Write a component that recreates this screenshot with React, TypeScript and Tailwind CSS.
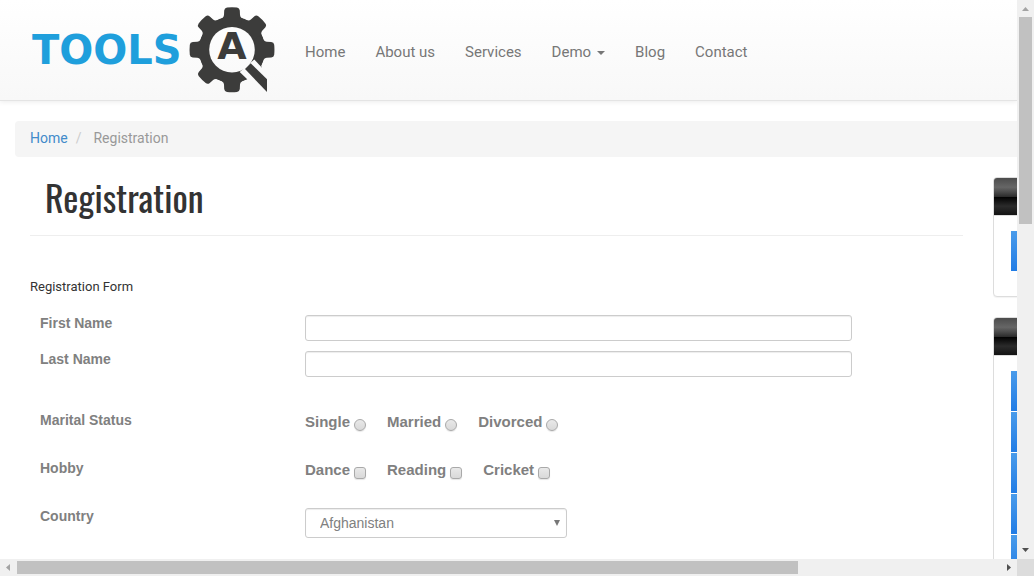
import React from "react";

const teeth = [0, 45, 90, 180, 225, 270, 315];
const navLinks = ["Home", "About us", "Services", "Demo", "Blog", "Contact"];

function Logo() {
  return (
    <svg width="246" height="90" viewBox="30 5 246 90" role="img" aria-label="Tools QA">
      <defs>
        <mask id="lens" maskUnits="userSpaceOnUse" x="180" y="0" width="100" height="100">
          <rect x="180" y="0" width="100" height="100" fill="#fff" />
          <circle cx="232" cy="49.7" r="22.8" fill="#000" />
          <path d="M239.7 72 L248.3 80.3 L252 97 L276 97 L276 70 L262 67.8 L254.3 59.5 Z" fill="#000" />
        </mask>
      </defs>
      <text x="32" y="64" fontFamily="'DejaVu Sans', sans-serif" fontWeight="700" fontSize="40" fill="#1f9fdc">
        TOOLS
      </text>
      <g mask="url(#lens)" fill="#3c3c3b">
        <circle cx="232" cy="49.7" r="33.2" />
        {teeth.map((angle) => (
          <path
            key={angle}
            transform={`rotate(${angle} 232 49.7)`}
            d="M217 20.5 Q223.8 18.5 224 15 L224.2 10.5 Q224.5 7.8 227 7.5 Q232 7 237 7.5 Q239.5 7.8 239.8 10.5 L240 15 Q240.2 18.5 247 20.5 L242 28 L222 28 Z"
          />
        ))}
        <path
          transform="rotate(135 232 49.7)"
          d="M217 20.5 Q223.8 18.5 224 15 L224.2 10.5 L239.8 10.5 L240 15 Q240.2 18.5 247 20.5 L242 28 L222 28 Z"
        />
      </g>
      <path d="M245 69 L250.7 63.3 L267 79.3 L267 92 Z" fill="#3c3c3b" />
      <text x="232" y="59" textAnchor="middle" fontFamily="'DejaVu Sans', sans-serif" fontWeight="700" fontSize="38" fill="#3c3c3b">
        A
      </text>
    </svg>
  );
}

function Header() {
  return (
    <header className="flex h-[101px] shrink-0 items-start border-b border-[#e4e4e4] bg-gradient-to-b from-white to-[#f8f8f8] pl-[30px] pt-[5px] shadow-[0_1px_5px_rgba(0,0,0,0.08)]">
      <a href="#" className="shrink-0">
        <Logo />
      </a>
      <nav className="ml-[14px] mt-[37px] flex shrink-0 font-['Roboto',sans-serif] text-[15px] leading-5 text-[#777]">
        {navLinks.map((label) => (
          <a key={label} href="#" className="flex items-center px-[15px]">
            {label}
            {label === "Demo" && (
              <span className="ml-[6px] mt-[2px] border-x-4 border-t-4 border-x-transparent border-t-[#777]" />
            )}
          </a>
        ))}
      </nav>
    </header>
  );
}

function Row({ label, htmlFor, className, children }: {
  label: string;
  htmlFor?: string;
  className?: string;
  children: React.ReactNode;
}) {
  const labelClass = "w-[265px] shrink-0 text-sm leading-4 font-bold text-[#808080]";
  return (
    <div className={`flex items-start ${className ?? ""}`}>
      {htmlFor ? (
        <label htmlFor={htmlFor} className={labelClass}>{label}</label>
      ) : (
        <span className={labelClass}>{label}</span>
      )}
      {children}
    </div>
  );
}

function Choices({ type, name, options }: { type: "radio" | "checkbox"; name: string; options: string[] }) {
  const shape = type === "radio" ? "rounded-full" : "rounded-[3px]";
  return (
    <div role="group" aria-label={name} className="flex gap-[21px]">
      {options.map((option) => (
        <label key={option} className="flex items-start gap-1 text-[15px] leading-5 font-bold text-[#808080]">
          {option}
          <input
            type={type}
            name={name}
            className={`mt-[7px] size-3 appearance-none border border-[#a9a9a9] bg-gradient-to-b from-[#e9e9e9] to-[#d9d9d9] shadow-[0_1px_1px_rgba(0,0,0,0.1)] checked:bg-[#777] ${shape}`}
          />
        </label>
      ))}
    </div>
  );
}

const inputClass =
  "h-[26px] min-w-0 flex-1 rounded-[3px] border border-[#ccc] bg-white px-3 text-sm text-[#777] shadow-[inset_0_1px_1px_rgba(0,0,0,0.075)]";

function RegistrationForm() {
  return (
    <form className="pl-[10px] pr-[111px] pt-[18px]">
      <Row label="First Name" htmlFor="first">
        <input id="first" type="text" className={inputClass} />
      </Row>
      <Row label="Last Name" htmlFor="last" className="mt-[10px]">
        <input id="last" type="text" className={inputClass} />
      </Row>
      <Row label="Marital Status" className="mt-[35px]">
        <Choices type="radio" name="Marital Status" options={["Single", "Married", "Divorced"]} />
      </Row>
      <Row label="Hobby" className="mt-7">
        <Choices type="checkbox" name="Hobby" options={["Dance", "Reading", "Cricket"]} />
      </Row>
      <Row label="Country" htmlFor="country" className="mt-7">
        <div className="relative w-[262px]">
          <select
            id="country"
            className="block h-[30px] w-full appearance-none rounded-[3px] border border-[#ccc] bg-white px-[14px] text-sm text-[#808080] shadow-[inset_0_1px_1px_rgba(0,0,0,0.075)]"
          >
            <option>Afghanistan</option>
          </select>
          <svg className="pointer-events-none absolute right-[7px] top-3 h-[6px] w-[6px]" viewBox="0 0 6 6">
            <path d="M0 0H6L3 6Z" fill="#777" />
          </svg>
        </div>
      </Row>
    </form>
  );
}

function Panel({ items }: { items: number }) {
  return (
    <section className="w-72 overflow-hidden rounded border border-[#ddd] bg-white shadow-[0_1px_1px_rgba(0,0,0,0.05)]">
      <div className="h-[38px] border-b border-[#ddd] bg-[linear-gradient(#4c4c4c_0%,#666_25%,#474747_39%,#2c2c2c_50%,#000_51%,#2b2b2b_76%,#131313_100%)]" />
      <div className="flex min-h-20 flex-col gap-px px-[17px] pt-[15px]">
        {Array.from({ length: items }, (_, i) => (
          <div key={i} className="h-10 shrink-0 bg-gradient-to-b from-[#499bea] to-[#207ce5]" />
        ))}
      </div>
    </section>
  );
}

function Arrow({ d, color }: { d: string; color: string }) {
  return (
    <svg className="size-[17px] shrink-0" viewBox="0 0 17 17">
      <path d={d} fill={color} />
    </svg>
  );
}

export default function App() {
  return (
    <div className="grid h-screen grid-cols-[minmax(0,1fr)_17px] grid-rows-[minmax(0,1fr)_17px] bg-white font-['Liberation_Sans',Arial,sans-serif]">
      <div className="flex flex-col overflow-hidden">
        <Header />
        <nav
          aria-label="Breadcrumb"
          className="ml-[15px] mt-5 flex h-9 shrink-0 items-center rounded-l bg-[#f5f5f5] pl-[15px] pb-[2px] font-['Roboto',sans-serif] text-sm text-[#999]"
        >
          <a href="#" className="text-[#428bca]">Home</a>
          <span className="ml-2 mr-3 text-[#ccc]">/</span>
          <span>Registration</span>
        </nav>
        <div className="flex items-start gap-[30px] pl-[30px]">
          <main className="min-w-0 flex-1">
            <h1 className="border-b border-[#eee] pb-[18px] pl-[15px] pt-5 font-['Oswald','Liberation_Sans_Narrow',sans-serif] text-[36px] leading-10 text-[#333]">
              Registration
            </h1>
            <p className="mt-[41px] font-['Roboto',sans-serif] text-[13px] leading-5 text-[#333]">Registration Form</p>
            <RegistrationForm />
          </main>
          <aside className="mt-5 flex w-6 shrink-0 flex-col gap-5 overflow-hidden">
            <Panel items={1} />
            <Panel items={8} />
          </aside>
        </div>
      </div>
      <div className="flex flex-col items-center bg-[#f0f0f0]">
        <Arrow d="M5 11H12L8.5 7Z" color="#a3a3a3" />
        <div className="w-[13px] flex-[207] bg-[#c1c1c1]" />
        <div className="flex-[318]" />
        <Arrow d="M5 6H12L8.5 10Z" color="#505050" />
      </div>
      <div className="flex items-center bg-[#f0f0f0]">
        <Arrow d="M10 5V12L6 8.5Z" color="#a3a3a3" />
        <div className="h-[13px] flex-[781] bg-[#c1c1c1]" />
        <div className="flex-[202]" />
        <Arrow d="M7 5V12L11 8.5Z" color="#505050" />
      </div>
      <div className="bg-[#dcdcdc]" />
    </div>
  );
}
